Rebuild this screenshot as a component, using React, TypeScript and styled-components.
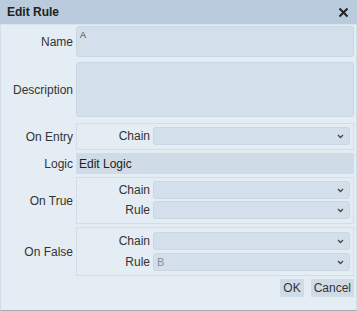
import * as React from "react";
import styled, { createGlobalStyle } from "styled-components";

const Global = createGlobalStyle`
  html, body {
    margin: 0;
    padding: 0;
    background: #e4ecf4;
  }
  body {
    font-family: "Liberation Sans", Arial, sans-serif;
    font-size: 12px;
    color: #333;
  }
`;

const Dialog = styled.div`
  width: 357px;
  height: 311px;
  box-sizing: border-box;
  background: #e4ecf4;
  border-left: 1px solid #d2dde8;
  border-right: 1px solid #d2dde8;
  border-bottom: 1px solid #a2a9b1;
  display: flex;
  flex-direction: column;
`;

const Header = styled.div`
  height: 24px;
  margin: 0 -1px;
  background: #b9cbdc;
  border-bottom: 1px solid #d8e3ee;
  display: flex;
  align-items: center;
  justify-content: space-between;
  padding: 0 8px 0 7px;
`;

const Title = styled.span`
  font-weight: bold;
  font-size: 12px;
  color: #222;
`;

const Close = styled.button`
  border: 0;
  background: none;
  padding: 0;
  width: 12px;
  height: 12px;
  display: flex;
  align-items: center;
  justify-content: center;
  cursor: pointer;
`;

const Form = styled.div`
  display: grid;
  grid-template-columns: 74px 279px;
  padding: 1px 2px 0 0;
`;

const Label = styled.div<{ $gap?: number }>`
  display: flex;
  align-items: center;
  justify-content: flex-end;
  padding-right: 2px;
  margin-top: ${(p) => p.$gap ?? 3}px;
  color: #333;
`;

const Cell = styled.div<{ $gap?: number }>`
  margin-top: ${(p) => p.$gap ?? 3}px;
  margin-left: 1px;
`;

const Area = styled.div<{ $h: number }>`
  height: ${(p) => p.$h}px;
  box-sizing: border-box;
  background: #d3dfea;
  border: 1px solid #c9d6e3;
  border-radius: 3px;
  padding: 3px 3px;
  font-size: 9px;
  color: #444;
`;

const LogicBar = styled.div`
  height: 21px;
  box-sizing: border-box;
  background: #cfdce8;
  display: flex;
  align-items: center;
  padding-left: 3px;
  color: #222;
`;

const Group = styled.div<{ $loose?: boolean }>`
  box-sizing: border-box;
  border: 1px solid #d2dde8;
  padding: ${(p) => (p.$loose ? "4px 3px 4px 0" : "3px 3px 4px 0")};
  display: grid;
  grid-template-columns: 73px 1fr;
  column-gap: 3px;
  row-gap: ${(p) => (p.$loose ? 3 : 2)}px;
`;

const SubLabel = styled.div`
  display: flex;
  align-items: center;
  justify-content: flex-end;
  color: #333;
`;

const Select = styled.div`
  height: 18px;
  box-sizing: border-box;
  background: #d3dfea;
  border: 1px solid #c9d6e3;
  border-radius: 3px;
  display: flex;
  align-items: center;
  justify-content: space-between;
  padding: 0 5px 0 3px;
  font-size: 11px;
  color: #8a8f95;
`;

const Footer = styled.div`
  display: flex;
  justify-content: flex-end;
  gap: 7px;
  padding: 3px 2px 0 0;
`;

const Button = styled.button`
  height: 18px;
  border: 0;
  background: #cfdce8;
  font-family: "Liberation Sans", Arial, sans-serif;
  font-size: 12px;
  color: #333;
  padding: 0 3px;
  cursor: pointer;
`;

const Chevron = () => (
  <svg width="7" height="5" viewBox="0 0 7 5">
    <path d="M1 1 L3.5 3.5 L6 1" fill="none" stroke="#444" strokeWidth="1.3" />
  </svg>
);

const Sel: React.FC<{ value?: string }> = ({ value }) => (
  <Select>
    <span>{value}</span>
    <Chevron />
  </Select>
);

const Pair: React.FC<{ rule?: boolean; ruleValue?: string; loose?: boolean }> = ({
  rule,
  ruleValue,
  loose,
}) => (
  <Group $loose={loose}>
    <SubLabel>Chain</SubLabel>
    <Sel />
    {rule && (
      <>
        <SubLabel>Rule</SubLabel>
        <Sel value={ruleValue} />
      </>
    )}
  </Group>
);

export default function App() {
  return (
    <>
      <Global />
      <Dialog>
        <Header>
          <Title>Edit Rule</Title>
          <Close aria-label="close">
            <svg width="11" height="11" viewBox="0 0 11 11">
              <path d="M1.5 1.5 L9.5 9.5 M9.5 1.5 L1.5 9.5" stroke="#222" strokeWidth="2" />
            </svg>
          </Close>
        </Header>
        <Form>
          <Label $gap={0}>Name</Label>
          <Cell $gap={0}>
            <Area $h={31}>A</Area>
          </Cell>
          <Label $gap={5}>Description</Label>
          <Cell $gap={5}>
            <Area $h={55} />
          </Cell>
          <Label $gap={6}>On Entry</Label>
          <Cell $gap={6}>
            <Pair />
          </Cell>
          <Label>Logic</Label>
          <Cell>
            <LogicBar>Edit Logic</LogicBar>
          </Cell>
          <Label>On True</Label>
          <Cell>
            <Pair rule />
          </Cell>
          <Label>On False</Label>
          <Cell>
            <Pair rule ruleValue="B" loose />
          </Cell>
        </Form>
        <Footer>
          <Button>OK</Button>
          <Button>Cancel</Button>
        </Footer>
      </Dialog>
    </>
  );
}
